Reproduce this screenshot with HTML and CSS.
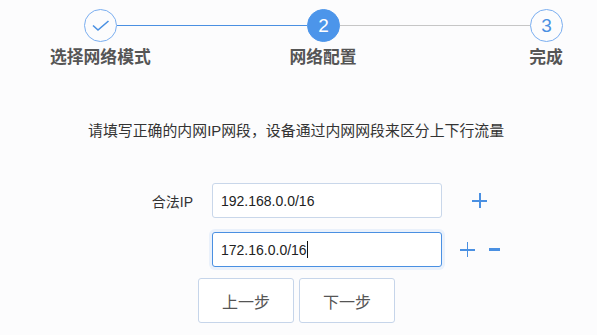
FILE: index.html
```html
<!DOCTYPE html>
<html lang="zh-CN">

<head>
  <meta charset="UTF-8">
  <meta name="viewport" content="width=device-width, initial-scale=1.0">
  <title>网络配置</title>
  <link rel="stylesheet" href="styles.css">
</head>

<body>

  <div class="wizard">
    <!-- Step indicator -->
    <div class="steps">
      <div class="step-dot done">
        <svg width="18" height="12" viewBox="0 0 18 12">
          <path d="M1 5.5 L6 10 L16.5 1" fill="none" stroke="#4a90e2" stroke-width="1.6" />
        </svg>
      </div>
      <div class="step-line active"></div>
      <div class="step-dot current">2</div>
      <div class="step-line"></div>
      <div class="step-dot todo">3</div>
    </div>
    <div class="step-labels">
      <span>选择网络模式</span>
      <span>网络配置</span>
      <span>完成</span>
    </div>

    <p class="tip">请填写正确的内网IP网段，设备通过内网网段来区分上下行流量</p>

    <!-- IP ranges -->
    <div class="ip-form">
      <div class="ip-row">
        <label class="ip-label">合法IP</label>
        <div class="field">192.168.0.0/16</div>
        <div class="ip-actions">
          <span class="icon-btn plus"></span>
        </div>
      </div>
      <div class="ip-row">
        <span class="ip-label"></span>
        <div class="field is-active">172.16.0.0/16<span class="caret"></span></div>
        <div class="ip-actions">
          <span class="icon-btn plus"></span>
          <span class="icon-btn minus"></span>
        </div>
      </div>
    </div>

    <div class="form-buttons">
      <button class="btn">上一步</button>
      <button class="btn">下一步</button>
    </div>
  </div>

</body>

</html>
```

FILE: styles.css
```css
/* Global Styles */
body,
html {
  margin: 0;
  padding: 0;
  background-color: #fcfcfd;
  font-family: 'Liberation Sans', 'Noto Sans CJK SC', sans-serif;
  color: #333;
}

.wizard {
  width: 597px;
  height: 335px;
  overflow: hidden;
}

/* Steps */
.steps {
  display: flex;
  align-items: center;
  padding: 9px 34px 0 84px;
}

.step-dot {
  width: 33px;
  height: 33px;
  box-sizing: border-box;
  border-radius: 50%;
  border: 1.5px solid #7aaef0;
  display: flex;
  justify-content: center;
  align-items: center;
  flex-shrink: 0;
  font-size: 19px;
  color: #4a90e2;
}

.step-dot.done svg {
  margin-top: 1px;
  margin-left: 1px;
}

.step-dot.current {
  background-color: #4c95ea;
  border-color: #4c95ea;
  color: #fff;
}

.step-line {
  flex: 1;
  height: 1.5px;
  background-color: #c6c6c6;
}

.step-line.active {
  background-color: #4a90e2;
}

.step-labels {
  display: grid;
  grid-template-columns: repeat(3, 100px);
  justify-content: space-between;
  padding: 4px 1px 0 50px;
  font-size: 16.8px;
  font-weight: 700;
  color: #555;
  text-align: center;
  white-space: nowrap;
  line-height: 24px;
}

/* Tip */
.tip {
  margin: 51px 0 0 88px;
  font-size: 14.9px;
  line-height: 20px;
  color: #333;
}

/* IP form */
.ip-form {
  margin-top: 42px;
  display: flex;
  flex-direction: column;
  gap: 14px;
}

.ip-row {
  display: grid;
  grid-template-columns: 212px 230px 75px;
  align-items: center;
}

.ip-label {
  text-align: right;
  padding-right: 19px;
  font-size: 14px;
  color: #333;
}

.field {
  height: 35px;
  box-sizing: border-box;
  padding: 0 8px;
  border: 1px solid #c9d7ea;
  border-radius: 3px;
  background-color: #fff;
  display: flex;
  align-items: center;
  font-size: 14px;
  color: #222;
}

.field.is-active {
  border-color: #4a90e2;
  box-shadow: 0 0 0 3px #eaf1fb;
}

.caret {
  width: 1px;
  height: 17px;
  background-color: #111;
}

.ip-actions {
  display: flex;
  justify-content: center;
  align-items: center;
  gap: 14px;
}

.icon-btn {
  display: block;
  position: relative;
  width: 15px;
  height: 15px;
  cursor: pointer;
}

.icon-btn::before,
.icon-btn::after {
  content: '';
  position: absolute;
  background-color: #4a90e2;
}

.plus::before {
  left: 0;
  right: 0;
  top: 7px;
  height: 1.5px;
}

.plus::after {
  top: 0;
  bottom: 0;
  left: 7px;
  width: 1.5px;
}

.minus {
  width: 11px;
}

.minus::before {
  left: 0;
  right: 0;
  top: 6px;
  height: 2.5px;
}

.minus::after {
  display: none;
}

/* Buttons */
.form-buttons {
  display: flex;
  gap: 5px;
  padding-left: 198px;
  margin-top: 11px;
}

.btn {
  width: 96px;
  height: 45px;
  border: 1px solid #c6d5ea;
  border-radius: 3px;
  background-color: #fff;
  font-family: inherit;
  font-size: 16px;
  color: #555;
  cursor: pointer;
}
```
